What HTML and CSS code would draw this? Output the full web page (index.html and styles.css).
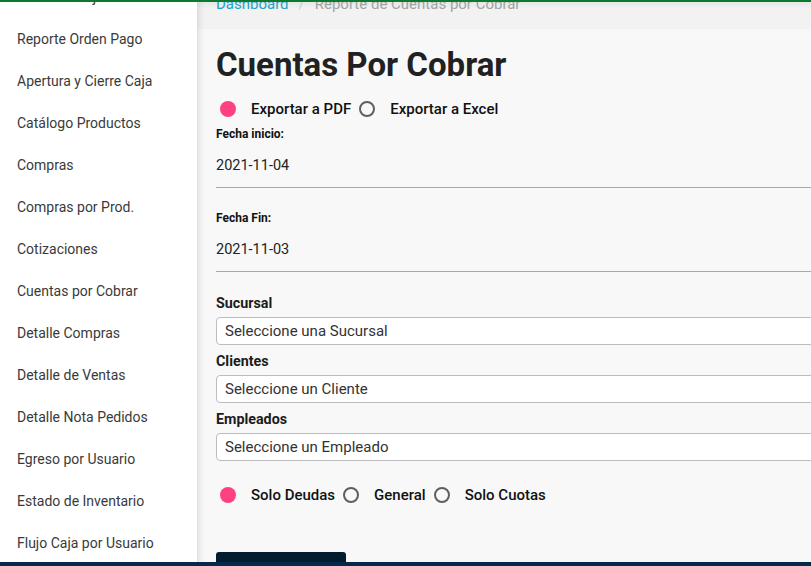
FILE: index.html
```html
<!DOCTYPE html>
<html lang="es">
<head>
<meta charset="utf-8">
<title>Cuentas Por Cobrar</title>
<link rel="stylesheet" href="styles.css">
</head>
<body>
<div class="topline"></div>
<div class="layout">
  <aside class="sidebar">
    <ul class="menu">
      <li>Cierre de Caja</li>
      <li>Reporte Orden Pago</li>
      <li>Apertura y Cierre Caja</li>
      <li>Catálogo Productos</li>
      <li>Compras</li>
      <li>Compras por Prod.</li>
      <li>Cotizaciones</li>
      <li>Cuentas por Cobrar</li>
      <li>Detalle Compras</li>
      <li>Detalle de Ventas</li>
      <li>Detalle Nota Pedidos</li>
      <li>Egreso por Usuario</li>
      <li>Estado de Inventario</li>
      <li>Flujo Caja por Usuario</li>
    </ul>
  </aside>
  <main class="main">
    <div class="header">
      <div class="crumbs"><span class="crumb-link">Dashboard</span><span class="crumb-sep">/</span><span class="crumb-current">Reporte de Cuentas por Cobrar</span></div>
    </div>
    <div class="content">
      <h1 class="title">Cuentas Por Cobrar</h1>
      <div class="radios radios-top">
        <label class="option"><span class="radio checked"></span><span class="opt-label">Exportar a PDF</span></label>
        <label class="option"><span class="radio"></span><span class="opt-label">Exportar a Excel</span></label>
      </div>
      <div class="date-field first">
        <div class="date-label">Fecha inicio:</div>
        <div class="date-input">2021-11-04</div>
      </div>
      <div class="date-field">
        <div class="date-label">Fecha Fin:</div>
        <div class="date-input">2021-11-03</div>
      </div>
      <div class="selects">
        <div class="sel-label">Sucursal</div>
        <div class="select">Seleccione una Sucursal</div>
        <div class="sel-label">Clientes</div>
        <div class="select">Seleccione un Cliente</div>
        <div class="sel-label">Empleados</div>
        <div class="select">Seleccione un Empleado</div>
      </div>
      <div class="radios radios-bottom">
        <label class="option"><span class="radio checked"></span><span class="opt-label">Solo Deudas</span></label>
        <label class="option"><span class="radio"></span><span class="opt-label">General</span></label>
        <label class="option"><span class="radio"></span><span class="opt-label">Solo Cuotas</span></label>
      </div>
      <button class="submit" type="button"></button>
    </div>
  </main>
</div>
<div class="bottombar"></div>
</body>
</html>
```
FILE: styles.css
```css
html, body {
  margin: 0;
  padding: 0;
  height: 566px;
  overflow: hidden;
}
body {
  font-family: Roboto, "Liberation Sans", sans-serif;
  color: #222;
  background: #f8f8f8;
}
.topline {
  position: fixed;
  top: 0;
  left: 0;
  right: 0;
  height: 2px;
  background: #0b7a2f;
  z-index: 10;
}
.bottombar {
  position: fixed;
  left: 0;
  right: 0;
  bottom: 0;
  height: 4px;
  background: #06294a;
  z-index: 10;
}
.layout {
  display: flex;
  height: 566px;
}
.sidebar {
  width: 197px;
  flex-shrink: 0;
  background: #fff;
  position: relative;
  z-index: 2;
  box-shadow: 2px 0 6px rgba(0, 0, 0, 0.12);
  overflow: hidden;
}
.menu {
  list-style: none;
  margin: -24px 0 0;
  padding: 0;
}
.menu li {
  height: 42px;
  line-height: 42px;
  padding-left: 17px;
  font-size: 14px;
  color: #3a3a3a;
  white-space: nowrap;
}
.main {
  flex: 1;
  min-width: 0;
  overflow: hidden;
  background: #f8f8f8;
}
.header {
  height: 29px;
  background: linear-gradient(#e4e4e4, #f2f2f2 9px);
  overflow: hidden;
  padding-left: 19px;
}
.crumbs {
  margin-top: -5px;
  line-height: 18px;
  font-size: 15px;
  white-space: nowrap;
}
.crumb-link {
  color: #1ea2c9;
}
.crumb-sep {
  color: #cfcfcf;
  margin: 0 10px;
}
.crumb-current {
  color: #a3a3a3;
}
.content {
  padding-left: 19px;
  width: 720px;
}
.title {
  margin: 16px 0 0;
  font-size: 33px;
  line-height: 40px;
  font-weight: 700;
  color: #212121;
}
.radios {
  display: flex;
  align-items: center;
  gap: 4px;
  height: 24px;
}
.radios-top {
  margin-top: 12px;
}
.radios-bottom {
  margin-top: 22px;
}
.option {
  display: flex;
  align-items: center;
  gap: 15px;
}
.radio {
  box-sizing: border-box;
  width: 16px;
  height: 16px;
  margin-left: 4px;
  border-radius: 50%;
  border: 2px solid #5f5f5f;
}
.radio.checked {
  border: none;
  background: #ff4081;
}
.opt-label {
  font-size: 15px;
  font-weight: 500;
  color: #111;
}
.date-field {
  margin-top: 23px;
}
.date-field.first {
  margin-top: 6px;
}
.date-label {
  font-size: 12px;
  line-height: 14px;
  font-weight: 700;
  color: #111;
}
.date-input {
  padding: 15px 0 11px;
  line-height: 20px;
  font-size: 14.5px;
  color: #222;
  border-bottom: 1px solid #a8a8a8;
}
.selects {
  margin-top: 23px;
}
.sel-label {
  font-size: 14.3px;
  font-weight: 700;
  line-height: 17px;
  margin: 8px 0 5px;
  color: #1c1c1c;
}
.sel-label:first-child {
  margin-top: 0;
}
.select {
  box-sizing: border-box;
  height: 28px;
  line-height: 26px;
  border: 1px solid #bdbdbd;
  border-radius: 4px;
  background: #fff;
  padding-left: 8px;
  font-size: 15px;
  color: #333;
}
.submit {
  display: block;
  margin-top: 45px;
  width: 130px;
  height: 40px;
  border: none;
  border-radius: 3px;
  background: #031d2f;
}
```
